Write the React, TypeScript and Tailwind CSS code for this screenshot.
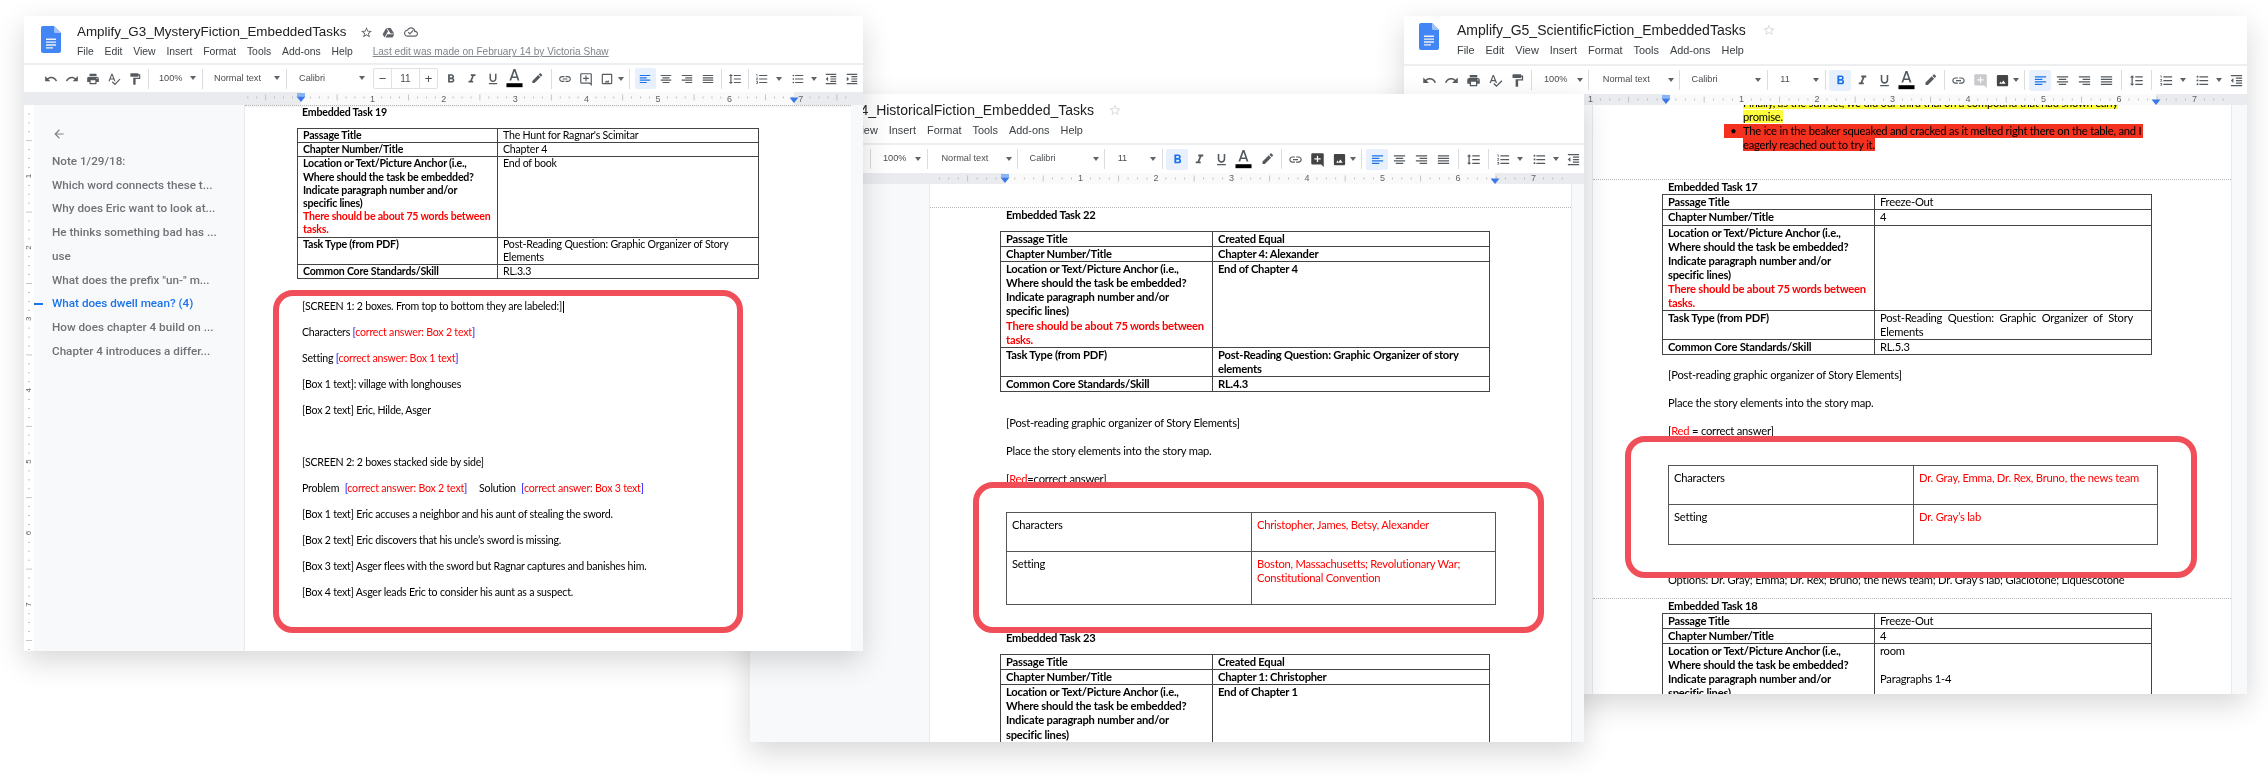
import type { ReactNode } from 'react';

const ICON = {
  undo: 'M12.5 8c-2.65 0-5.05.99-6.9 2.6L2 7v9h9l-3.62-3.62c1.39-1.16 3.16-1.88 5.12-1.88 3.54 0 6.55 2.31 7.6 5.5l2.37-.78C21.08 11.03 17.15 8 12.5 8z',
  redo: 'M18.4 10.6C16.55 8.99 14.15 8 11.5 8c-4.65 0-8.58 3.03-9.96 7.22L3.9 16c1.05-3.19 4.05-5.5 7.6-5.5 1.95 0 3.73.72 5.12 1.88L13 16h9V7l-3.6 3.6z',
  print: 'M19 8H5c-1.66 0-3 1.34-3 3v6h4v4h12v-4h4v-6c0-1.66-1.34-3-3-3zm-3 11H8v-5h8v5zm3-7c-.55 0-1-.45-1-1s.45-1 1-1 1 .45 1 1-.45 1-1 1zm-1-9H6v4h12V3z',
  spell: 'M12.45 16h2.09L9.43 3H7.57L2.46 16h2.09l1.12-3h5.64l1.14 3zm-6.02-5L8.5 5.48 10.57 11H6.43zm15.16.59l-8.09 8.09L9.83 16l-1.41 1.41 5.09 5.09L23 13l-1.41-1.41z',
  paint: 'M18 4V3c0-.55-.45-1-1-1H5c-.55 0-1 .45-1 1v4c0 .55.45 1 1 1h12c.55 0 1-.45 1-1V6h1v4H9v11c0 .55.45 1 1 1h2c.55 0 1-.45 1-1v-9h8V4h-3z',
  bold: 'M15.6 10.79c.97-.67 1.65-1.77 1.65-2.79 0-2.26-1.75-4-4-4H7v14h7.04c2.09 0 3.71-1.7 3.71-3.79 0-1.52-.86-2.82-2.15-3.42zM10 6.5h3c.83 0 1.5.67 1.5 1.5s-.67 1.5-1.5 1.5h-3v-3zm3.5 9H10v-3h3.5c.83 0 1.5.67 1.5 1.5s-.67 1.5-1.5 1.5z',
  italic: 'M10 4v3h2.21l-3.42 8H6v3h8v-3h-2.21l3.42-8H18V4z',
  underline: 'M12 17c3.31 0 6-2.69 6-6V3h-2.5v8c0 1.93-1.57 3.5-3.5 3.5S8.5 12.93 8.5 11V3H6v8c0 3.31 2.69 6 6 6zm-7 2v2h14v-2H5z',
  pen: 'M17.75 9L14 5.25l-10 10V19h3.75l10-10zm2.96-2.96c.39-.39.39-1.02 0-1.41l-2.34-2.34c-.39-.39-1.02-.39-1.41 0L15 4.25 18.75 8l1.96-1.96z',
  link: 'M3.9 12c0-1.71 1.39-3.1 3.1-3.1h4V7H7c-2.76 0-5 2.24-5 5s2.24 5 5 5h4v-1.9H7c-1.71 0-3.1-1.39-3.1-3.1zM8 13h8v-2H8v2zm9-6h-4v1.9h4c1.71 0 3.1 1.39 3.1 3.1s-1.39 3.1-3.1 3.1h-4V17h4c2.76 0 5-2.24 5-5s-2.24-5-5-5z',
  comment: 'M20 2H4c-1.1 0-2 .9-2 2v14c0 1.1.9 2 2 2h14l4 4V4c0-1.1-.9-2-2-2zm0 17.17L18.83 18H4V4h16v15.17zM13 6h-2v4H7v2h4v4h2v-4h4v-2h-4z',
  commentFill: 'M20 2H4c-1.1 0-2 .9-2 2v14c0 1.1.9 2 2 2h14l4 4V4c0-1.1-.9-2-2-2zM17 12h-4v4h-2v-4H7v-2h4V6h2v4h4v2z',
  image: 'M19 5v14H5V5h14m0-2H5c-1.1 0-2 .9-2 2v14c0 1.1.9 2 2 2h14c1.1 0 2-.9 2-2V5c0-1.1-.9-2-2-2zM14.14 13.86l-2 2.57L10.5 14.5 8 18h8z',
  imageFill: 'M21 19V5c0-1.1-.9-2-2-2H5c-1.1 0-2 .9-2 2v14c0 1.1.9 2 2 2h14c1.1 0 2-.9 2-2zM8.5 13.5l2 2.5 3-4 3.5 5H7l1.5-3.5z',
  left: 'M3 5h18v2H3zM3 9h12v2H3zM3 13h18v2H3zM3 17h12v2H3z',
  center: 'M3 5h18v2H3zM6 9h12v2H6zM3 13h18v2H3zM6 17h12v2H6z',
  right: 'M3 5h18v2H3zM9 9h12v2H9zM3 13h18v2H3zM9 17h12v2H9z',
  justify: 'M3 5h18v2H3zM3 9h18v2H3zM3 13h18v2H3zM3 17h18v2H3z',
  spacing: 'M6 7h2.5L5 3.5 1.5 7H4v10H1.5L5 20.5 8.5 17H6V7zm4-2v2h12V5H10zm0 14h12v-2H10v2zm0-6h12v-2H10v2z',
  numbered: 'M2 17h2v.5H3v1h1v.5H2v1h3v-4H2v1zm1-9h1V4H2v1h1v3zm-1 3h1.8L2 13.1v.9h3v-1H3.2L5 10.9V10H2v1zm5-6v2h14V5H7zm0 14h14v-2H7v2zm0-6h14v-2H7v2z',
  bullets: 'M4 10.5c-.83 0-1.5.67-1.5 1.5s.67 1.5 1.5 1.5 1.5-.67 1.5-1.5-.67-1.5-1.5-1.5zm0-6c-.83 0-1.5.67-1.5 1.5S3.17 7.5 4 7.5 5.5 6.83 5.5 6 4.83 4.5 4 4.5zm0 12c-.83 0-1.5.68-1.5 1.5s.68 1.5 1.5 1.5 1.5-.68 1.5-1.5-.67-1.5-1.5-1.5zM7 19h14v-2H7v2zm0-6h14v-2H7v2zm0-8v2h14V5H7z',
  outdent: 'M11 17h10v-2H11v2zm-8-5l4 4V8l-4 4zm0 9h18v-2H3v2zM3 3v2h18V3H3zm8 6h10V7H11v2zm0 4h10v-2H11v2z',
  indent: 'M3 21h18v-2H3v2zM3 8v8l4-4-4-4zm8 9h10v-2H11v2zM3 3v2h18V3H3zm8 6h10V7H11v2zm0 4h10v-2H11v2z',
  star: 'M22 9.24l-7.19-.62L12 2 9.19 8.63 2 9.24l5.46 4.73L5.82 21 12 17.27 18.18 21l-1.63-7.03L22 9.24zM12 15.4l-3.76 2.27 1-4.28-3.32-2.88 4.38-.38L12 6.1l1.71 4.04 4.38.38-3.32 2.88 1 4.28L12 15.4z',
  drive: 'M7.71 3.5L1.15 15l3.43 6 6.55-11.5L7.71 3.5zM9.73 15L6.3 21h13.12l3.43-6H9.73zM22.61 14L15.84 3.5H9.1L15.84 14h6.77z',
  cloud: 'M19.35 10.04C18.67 6.59 15.64 4 12 4 9.11 4 6.6 5.64 5.35 8.04 2.34 8.36 0 10.91 0 14c0 3.31 2.69 6 6 6h13c2.76 0 5-2.24 5-5 0-2.64-2.05-4.78-4.65-4.96zM19 18H6c-2.21 0-4-1.79-4-4s1.79-4 4-4h.71C7.37 7.69 9.48 6 12 6c3.04 0 5.5 2.46 5.5 5.5v.5H19c1.66 0 3 1.34 3 3s-1.34 3-3 3zm-9-1.5l-3.5-3.5 1.41-1.41L10 13.67l5.09-5.09 1.41 1.41z',
  back: 'M20 11H7.83l5.59-5.59L12 4l-8 8 8 8 1.41-1.41L7.83 13H20v-2z',
};

function Ic({ d, className = 'size-[14px] fill-[#555a5f]' }: { d: string; className?: string }) {
  return (
    <svg viewBox="0 0 24 24" className={className} fillRule="evenodd">
      <path d={d} />
    </svg>
  );
}

function DocIcon() {
  return (
    <svg viewBox="0 0 20 27" className="h-[27px] w-[20px] shrink-0">
      <path d="M2 0h11l7 7v18a2 2 0 0 1-2 2H2a2 2 0 0 1-2-2V2a2 2 0 0 1 2-2z" fill="#4285f4" />
      <path d="M13 0l7 7h-5.5A1.5 1.5 0 0 1 13 5.5z" fill="#a1c2fa" />
      <path d="M5 12.5h10v1.4H5zM5 15.4h10v1.4H5zM5 18.3h10v1.4H5zM5 21.2h7v1.4H5z" fill="#f1f1f1" />
    </svg>
  );
}

function Caret() {
  return <span className="h-0 w-0 border-x-[3.5px] border-t-[4px] border-x-transparent border-t-[#5f6368]" />;
}

function Sep({ className }: { className: string }) {
  return (
    <span className={`flex h-[20px] justify-center ${className}`}>
      <span className="h-full w-px bg-[#dadce0]" />
    </span>
  );
}

function Drop({ label, className }: { label: string; className: string }) {
  return (
    <span className={`flex items-center justify-between pr-[3px] text-[9.2px] text-[#4a4d51] ${className}`}>
      <span>{label}</span>
      <Caret />
    </span>
  );
}

function Tool({ d, wide, active, iconClass }: { d: string; wide?: boolean; active?: boolean; iconClass?: string }) {
  const sized = wide ? 'size-[15px]' : 'size-[14px]';
  return (
    <span className={`flex h-[21px] shrink-0 items-center justify-center rounded-[2px] ${wide ? 'w-[22px]' : 'w-[21px]'} ${active ? 'bg-[#e8f0fe]' : ''}`}>
      <Ic d={d} className={`${sized} ${iconClass ?? (active ? 'fill-[#1a73e8]' : 'fill-[#555a5f]')}`} />
    </span>
  );
}

function ColorA({ wide }: { wide?: boolean }) {
  return (
    <span className={`flex h-[21px] shrink-0 justify-center ${wide ? 'w-[22px]' : 'w-[21px]'}`}>
      <svg viewBox="0 0 18 22" className="h-[21px] w-[17px]">
        <path d="M8 1L3.6 13h1.9l.9-2.6h5l.9 2.6h1.9L10 1H8zm-1 7.8L9 3.4l2 5.4H7z" fill="#555a5f" />
        <rect x="0.5" y="16" width="17" height="4.2" fill="#000" />
      </svg>
    </span>
  );
}

function ToolbarA() {
  return (
    <div className="flex h-[29px] shrink-0 items-center border-t-2 border-[#eceef0] pl-[16px]">
      <Tool d={ICON.undo} />
      <Tool d={ICON.redo} />
      <Tool d={ICON.print} />
      <Tool d={ICON.spell} />
      <Tool d={ICON.paint} />
      <Sep className="w-[6px]" />
      <Drop label="100%" className="w-[48px] pl-[8px]" />
      <Sep className="w-[6px]" />
      <Drop label="Normal text" className="w-[78px] pl-[9px]" />
      <Sep className="w-[7px]" />
      <Drop label="Calibri" className="w-[78px] pl-[9px]" />
      <span className="ml-[5px] flex h-[21px] w-[65px] items-center rounded-[2px] border border-[#dfe1e5] text-[10px] text-[#4a4d51]">
        <span className="flex w-[18px] justify-center border-r border-[#dfe1e5] text-[13px] leading-[19px]">−</span>
        <span className="flex-1 text-center">11</span>
        <span className="flex w-[18px] justify-center border-l border-[#dfe1e5] text-[13px] leading-[19px]">+</span>
      </span>
      <span className="w-[2.5px]" />
      <Tool d={ICON.bold} />
      <Tool d={ICON.italic} />
      <Tool d={ICON.underline} />
      <ColorA />
      <span className="ml-[2px]">
        <Tool d={ICON.pen} />
      </span>
      <Sep className="w-[7px]" />
      <Tool d={ICON.link} />
      <Tool d={ICON.comment} />
      <Tool d={ICON.image} />
      <span className="flex w-[7px]"><Caret /></span>
      <Sep className="w-[10px]" />
      <Tool d={ICON.left} active />
      <Tool d={ICON.center} />
      <Tool d={ICON.right} />
      <Tool d={ICON.justify} />
      <Sep className="w-[6px]" />
      <Tool d={ICON.spacing} />
      <Sep className="w-[6px]" />
      <Tool d={ICON.numbered} />
      <span className="flex w-[12px] justify-center"><Caret /></span>
      <span className="w-[2.5px]" />
      <Tool d={ICON.bullets} />
      <span className="flex w-[12px] justify-center"><Caret /></span>
      <Tool d={ICON.outdent} />
      <Tool d={ICON.indent} />
    </div>
  );
}

function ToolbarB({ padClass, mutedComment }: { padClass: string; mutedComment?: boolean }) {
  return (
    <div className={`flex h-[30px] shrink-0 items-center border-t-2 border-[#eceef0] ${padClass}`}>
      <Tool wide d={ICON.undo} />
      <Tool wide d={ICON.redo} />
      <Tool wide d={ICON.print} />
      <Tool wide d={ICON.spell} />
      <Tool wide d={ICON.paint} />
      <Sep className="w-[8px]" />
      <Drop label="100%" className="w-[50px] pl-[8px]" />
      <Sep className="w-[6px]" />
      <Drop label="Normal text" className="w-[85px] pl-[11px]" />
      <Sep className="w-[6px]" />
      <Drop label="Calibri" className="w-[82px] pl-[9px]" />
      <Sep className="w-[6px]" />
      <Drop label="11" className="w-[52px] pl-[10px]" />
      <Sep className="w-[7px]" />
      <Tool wide active d={ICON.bold} />
      <Tool wide d={ICON.italic} />
      <Tool wide d={ICON.underline} />
      <ColorA wide />
      <span className="ml-[2px]">
        <Tool wide d={ICON.pen} />
      </span>
      <Sep className="w-[6px]" />
      <Tool wide d={ICON.link} />
      <Tool wide d={ICON.commentFill} iconClass={mutedComment ? 'fill-[#c8cacd]' : 'fill-[#444]'} />
      <Tool wide d={ICON.imageFill} iconClass="fill-[#444]" />
      <span className="flex w-[6px] shrink-0"><Caret /></span>
      <Sep className="w-[10px] shrink-0" />
      <Tool wide active d={ICON.left} />
      <Tool wide d={ICON.center} />
      <Tool wide d={ICON.right} />
      <Tool wide d={ICON.justify} />
      <Sep className="w-[8px] shrink-0" />
      <Tool wide d={ICON.spacing} />
      <Sep className="w-[8px] shrink-0" />
      <Tool wide d={ICON.numbered} />
      <span className="flex w-[12px] shrink-0 justify-center"><Caret /></span>
      <span className="w-[2px] shrink-0" />
      <Tool wide d={ICON.bullets} />
      <span className="flex w-[12px] shrink-0 justify-center"><Caret /></span>
      <Tool wide d={ICON.outdent} />
    </div>
  );
}

// horizontal ruler, all x values are relative to the window
function Ruler({ width, height, pageL, pageR, zero, step, marginR }: { width: number; height: number; pageL: number; pageR: number; zero: number; step: number; marginR: number }) {
  const ticks: ReactNode[] = [];
  for (let i = -16; i < 72; i++) {
    const x = zero + (i * step) / 8;
    if (x < pageL || x > pageR) continue;
    if (i % 8 === 0) {
      const n = i / 8;
      if (n === 0) continue;
      ticks.push(
        <text key={i} x={x} y={height - 3} fontSize="9" textAnchor="middle" fill="#5f6368" fontFamily="Liberation Sans">
          {Math.abs(n)}
        </text>,
      );
    } else {
      const long = i % 4 === 0;
      ticks.push(<rect key={i} x={x} y={long ? 2.5 : 4.5} width="0.8" height={long ? 6 : 2} fill={long ? '#b5b8bc' : '#b0b3b7'} />);
    }
  }
  return (
    <svg width={width} height={height} className="block shrink-0">
      <rect width={width} height={height} fill="#e9ebee" />
      <rect x={zero} width={marginR - zero} height={height} fill="#fafafb" />
      {ticks}
      <rect x={zero - 4} y="1" width="8" height="3.5" fill="#8ab4f8" />
      <path d={`M${zero - 4.5} 4.5h9L${zero} 10z`} fill="#3b78e7" />
      <path d={`M${marginR - 4.5} 5.5h9L${marginR} 11z`} fill="#3b78e7" />
    </svg>
  );
}

function VRuler() {
  const items: ReactNode[] = [];
  for (let i = 0; i < 62; i++) {
    const y = 71 + (i * 71.4) / 8 - 71.4;
    if (y < 0) continue;
    if (i % 8 === 0) {
      const yy = y;
      items.push(
        <text key={i} x="5" y={yy} fontSize="8" textAnchor="middle" fill="#5f6368" fontFamily="Liberation Sans" transform={`rotate(-90 5 ${yy})`} dominantBaseline="middle">
          {i / 8}
        </text>,
      );
    } else {
      const long = i % 4 === 0;
      items.push(<rect key={i} x={long ? 2 : 4} y={y} width={long ? 6 : 2} height="0.8" fill="#b5b8bc" />);
    }
  }
  return (
    <svg width="10" height="546" className="block shrink-0 bg-white">
      {items}
    </svg>
  );
}

function DottedLine() {
  return <div className="border-t border-dotted border-[#b8b8b8]" />;
}

const ANCHOR = ['Location or Text/Picture Anchor (i.e.,', 'Where should the task be embedded?', 'Indicate paragraph number and/or', 'specific lines)'];

function AnchorCell() {
  return (
    <>
      {ANCHOR.map((t) => (
        <div key={t}>{t}</div>
      ))}
      <div className="text-[#f00]">There should be about 75 words between</div>
      <div className="text-[#f00]">tasks.</div>
    </>
  );
}

function TaskTable({ rows, widthClass, leftClass, rightBold, className = '' }: { rows: [ReactNode, ReactNode][]; widthClass: string; leftClass: string; rightBold?: boolean; className?: string }) {
  return (
    <table className={`table-fixed border-collapse ${widthClass} ${className}`}>
      <colgroup>
        <col className={leftClass} />
        <col />
      </colgroup>
      <tbody>
        {rows.map((r, i) => (
          <tr key={i}>
            <td className="border border-[#444] px-[5px] align-top font-bold">{r[0]}</td>
            <td className={`border border-[#444] px-[5px] align-top ${rightBold ? 'font-bold' : ''}`}>{r[1]}</td>
          </tr>
        ))}
      </tbody>
    </table>
  );
}

function StoryTable({ widthClass, leftClass, rows }: { widthClass: string; leftClass: string; rows: { label: string; value: ReactNode; h: string }[] }) {
  return (
    <table className={`table-fixed border-collapse ${widthClass}`}>
      <colgroup>
        <col className={leftClass} />
        <col />
      </colgroup>
      <tbody>
        {rows.map((r) => (
          <tr key={r.label} className={r.h}>
            <td className="border border-[#555] px-[5px] pt-[5px] align-top">{r.label}</td>
            <td className="border border-[#555] px-[5px] pt-[5px] align-top text-[#f00]">{r.value}</td>
          </tr>
        ))}
      </tbody>
    </table>
  );
}

function RedBox({ className }: { className: string }) {
  return <div className={`absolute rounded-[20px] border-[6px] border-[#f04f59] ${className}`} />;
}

const Blue = ({ children }: { children: ReactNode }) => <span className="text-[#00f]">{children}</span>;
const Red = ({ children }: { children: ReactNode }) => <span className="text-[#f00]">{children}</span>;

const OUTLINE = [
  'Note 1/29/18:',
  'Which word connects these t...',
  'Why does Eric want to look at...',
  'He thinks something bad has ...',
  'use',
  'What does the prefix "un-" m...',
  'What does dwell mean? (4)',
  'How does chapter 4 build on ...',
  'Chapter 4 introduces a differ...',
];

function Answer({ box }: { box: number }) {
  return (
    <>
      <Blue>[</Blue>
      <Red>correct answer: Box {box} text</Red>
      <Blue>]</Blue>
    </>
  );
}

function WindowOne() {
  const lines: ReactNode[] = [
    <>
      [SCREEN 1: 2 boxes. From top to bottom they are labeled:]
      <span className="ml-px inline-block h-[12px] w-px bg-black align-middle" />
    </>,
    <>Characters <Answer box={2} /></>,
    <>Setting <Answer box={1} /></>,
    '[Box 1 text]: village with longhouses',
    '[Box 2 text] Eric, Hilde, Asger',
    '',
    '[SCREEN 2: 2 boxes stacked side by side]',
    <>
      Problem <span className="ml-[3px]"><Answer box={2} /></span>
      <span className="ml-[12px]">Solution</span> <span className="ml-[3px]"><Answer box={3} /></span>
    </>,
    '[Box 1 text] Eric accuses a neighbor and his aunt of stealing the sword.',
    "[Box 2 text] Eric discovers that his uncle’s sword is missing.",
    '[Box 3 text] Asger flees with the sword but Ragnar captures and banishes him.',
    '[Box 4 text] Asger leads Eric to consider his aunt as a suspect.',
  ];
  return (
    <div className="absolute left-[24px] top-[16px] z-30 flex h-[635px] w-[839px] flex-col overflow-hidden bg-white shadow-[0_10px_28px_rgba(0,0,0,0.16)]">
      <div className="flex h-[47px] shrink-0 items-start pl-[17px] pt-[10px]">
        <DocIcon />
        <div className="ml-[16px] -mt-[4px]">
          <div className="flex h-[20px] items-center text-[13.4px] text-[#202124]">
            <span>Amplify_G3_MysteryFiction_EmbeddedTasks</span>
            <span className="ml-[14px] flex items-center gap-[9px]">
              <Ic d={ICON.star} className="size-[13px] fill-[#5f6368]" />
              <Ic d={ICON.drive} className="size-[13px] fill-[#5f6368]" />
              <Ic d={ICON.cloud} className="size-[14px] fill-[#5f6368]" />
            </span>
          </div>
          <div className="mt-[2px] flex h-[16px] items-center gap-[10.8px] text-[10.4px] text-[#3c4043]">
            <span>File</span>
            <span>Edit</span>
            <span>View</span>
            <span>Insert</span>
            <span>Format</span>
            <span>Tools</span>
            <span>Add-ons</span>
            <span>Help</span>
            <span className="ml-[9px] text-[10.1px] text-[#80868b] underline">Last edit was made on February 14 by Victoria Shaw</span>
          </div>
        </div>
      </div>
      <ToolbarA />
      <Ruler width={839} height={13} pageL={221} pageR={827} zero={277} step={71.4} marginR={770} />
      <div className="flex min-h-0 flex-1 shadow-[inset_0_2px_2px_rgba(0,0,0,0.06)]">
        <VRuler />
        <aside className="w-[211px] shrink-0 border-r border-[#e8eaed] bg-[#f8f9fa] pt-[22px] text-[11.7px] font-medium text-[#6f7378] font-['Roboto',sans-serif]">
          <div className="pl-[18px]">
            <Ic d={ICON.back} className="size-[14px] fill-[#80868b]" />
          </div>
          <ul className="mt-[9px]">
            {OUTLINE.map((item) => {
              const active = item.startsWith('What does dwell');
              return (
                <li key={item} className={`flex h-[23.7px] items-center ${active ? 'text-[#1a73e8]' : ''}`}>
                  <span className={`mr-[9px] h-[2px] w-[9px] ${active ? 'bg-[#1a73e8]' : ''}`} />
                  {item}
                </li>
              );
            })}
          </ul>
        </aside>
        <main className="relative flex-1 overflow-hidden border-t border-dotted border-[#b8b8b8] text-[10.6px] leading-[13.2px] text-black font-['Lato',sans-serif] tracking-[-0.02em]">
          <div className="pl-[52px]">
            <h3 className="h-[14px] pl-[5px] text-[10.6px] font-bold">Embedded Task 19</h3>
            <TaskTable
              className="mt-[8px]"
              widthClass="w-[462px]"
              leftClass="w-[200px]"
              rows={[
                ['Passage Title', <span className="font-normal">The Hunt for Ragnar's Scimitar</span>],
                ['Chapter Number/Title', 'Chapter 4'],
                [<AnchorCell />, 'End of book'],
                ['Task Type (from PDF)', <>Post-Reading Question: Graphic Organizer of Story<br />Elements</>],
                ['Common Core Standards/Skill', 'RL.3.3'],
              ]}
            />
            <div className="mt-[14px] pl-[5px]">
              {lines.map((l, i) => (
                <p key={i} className="flex h-[26px] items-center whitespace-pre-wrap">
                  <span>{l}</span>
                </p>
              ))}
            </div>
          </div>
          <RedBox className="left-[28px] top-[184px] h-[343px] w-[470px]" />
        </main>
        <div className="w-[12px] shrink-0 bg-[#f8f9fa]" />
      </div>
    </div>
  );
}

function Menu() {
  return (
    <div className="mt-[2px] flex h-[16px] items-center gap-[11px] text-[10.9px] text-[#3c4043]">
      <span>File</span>
      <span>Edit</span>
      <span>View</span>
      <span>Insert</span>
      <span>Format</span>
      <span>Tools</span>
      <span>Add-ons</span>
      <span>Help</span>
    </div>
  );
}

function WindowTwo() {
  return (
    <div className="absolute left-[750px] top-[94px] z-20 flex h-[648px] w-[834px] flex-col overflow-hidden bg-white shadow-[0_10px_28px_rgba(0,0,0,0.16)]">
      <div className="flex h-[49px] shrink-0 items-start pl-[8px] pt-[8px]">
        <DocIcon />
        <div className="ml-[18px] -mt-[2px]">
          <div className="flex h-[20px] items-center text-[14px] text-[#202124]">
            <span>Amplify_G4_HistoricalFiction_Embedded_Tasks</span>
            <Ic d={ICON.star} className="ml-[14px] size-[14px] fill-[#dadce0]" />
          </div>
          <Menu />
        </div>
      </div>
      <ToolbarB padClass="pl-[7px]" />
      <Ruler width={834} height={11} pageL={180} pageR={821} zero={255} step={75.5} marginR={745} />
      <div className="flex min-h-0 flex-1">
        <div className="w-[180px] shrink-0 border-r border-[#e8eaed] bg-[#f8f9fa]" />
        <main className="flex-1 overflow-hidden text-[11.2px] leading-[14.1px] text-black font-['Lato',sans-serif] tracking-[-0.02em]">
          <div className="relative h-full">
            <div className="pt-[23px]">
              <DottedLine />
            </div>
            <div className="pl-[70px]">
              <h3 className="h-[14px] pl-[6px] font-bold">Embedded Task 22</h3>
              <TaskTable
                className="mt-[9px]"
                widthClass="w-[490px]"
                leftClass="w-[212px]"
                rightBold
                rows={[
                  ['Passage Title', 'Created Equal'],
                  ['Chapter Number/Title', 'Chapter 4: Alexander'],
                  [<AnchorCell />, 'End of Chapter 4'],
                  ['Task Type (from PDF)', <>Post-Reading  Question: Graphic Organizer of story<br />elements</>],
                  ['Common Core Standards/Skill', 'RL.4.3'],
                ]}
              />
              <div className="mt-[17px] pl-[6px]">
                <p className="flex h-[28px] items-center">[Post-reading graphic organizer of Story Elements]</p>
                <p className="flex h-[28px] items-center">Place the story elements into the story map.</p>
                <p className="flex h-[28px] items-center">
                  <span>[<Red>Red</Red>=correct answer]</span>
                </p>
              </div>
              <div className="mt-[19px] pl-[6px]">
                <StoryTable
                  widthClass="w-[490px]"
                  leftClass="w-[245px]"
                  rows={[
                    { label: 'Characters', value: 'Christopher, James, Betsy, Alexander', h: 'h-[39px]' },
                    { label: 'Setting', value: <>Boston, Massachusetts; Revolutionary War;<br />Constitutional Convention</>, h: 'h-[53px]' },
                  ]}
                />
              </div>
              <h3 className="mt-[26px] h-[14px] pl-[6px] font-bold">Embedded Task 23</h3>
              <TaskTable
                className="mt-[9px]"
                widthClass="w-[490px]"
                leftClass="w-[212px]"
                rightBold
                rows={[
                  ['Passage Title', 'Created Equal'],
                  ['Chapter Number/Title', 'Chapter 1: Christopher'],
                  [<AnchorCell />, 'End of Chapter 1'],
                ]}
              />
            </div>
            <RedBox className="left-[43px] top-[298px] h-[151px] w-[571px]" />
          </div>
        </main>
        <div className="w-[13px] shrink-0 border-l border-[#e8eaed] bg-[#f8f9fa]" />
      </div>
    </div>
  );
}

function WindowThree() {
  return (
    <div className="absolute left-[1404px] top-[16px] z-10 flex h-[678px] w-[843px] flex-col overflow-hidden bg-white shadow-[0_10px_28px_rgba(0,0,0,0.16)]">
      <div className="flex h-[48px] shrink-0 items-start pl-[15px] pt-[7px]">
        <DocIcon />
        <div className="ml-[18px] -mt-[3px]">
          <div className="flex h-[20px] items-center text-[14px] text-[#202124]">
            <span>Amplify_G5_ScientificFiction_EmbeddedTasks</span>
            <Ic d={ICON.star} className="ml-[16px] size-[14px] fill-[#dadce0]" />
          </div>
          <Menu />
        </div>
      </div>
      <ToolbarB padClass="pl-[14px]" mutedComment />
      <Ruler width={843} height={11} pageL={184} pageR={828} zero={262} step={75.5} marginR={752} />
      <div className="flex min-h-0 flex-1">
        <div className="w-[188px] shrink-0 bg-[#f8f9fa]" />
        <main className="flex-1 overflow-hidden border-x border-[#e8eaed] text-[11.2px] leading-[14.1px] text-black font-['Lato',sans-serif] tracking-[-0.02em]">
          <div className="relative flow-root h-full">
            <div className="-mt-[9px] pl-[150px]">
              <div><span className="bg-[#fdfd3d]">Finally, as the sun set, we did our third trial on a compound that had shown early</span></div>
              <div><span className="bg-[#fdfd3d]">promise.</span></div>
              <div className="-ml-[19px] flex w-[419px] bg-[#f4301f]">
                <span className="flex w-[19px] justify-center">•</span>
                <span>The ice in the beaker squeaked and cracked as it melted right there on the table, and I</span>
              </div>
              <div><span className="bg-[#f4301f]">eagerly reached out to try it.</span></div>
            </div>
            <div className="pt-[27px]">
              <DottedLine />
            </div>
            <div className="pl-[69px]">
              <h3 className="h-[14px] pl-[6px] font-bold">Embedded Task 17</h3>
              <TaskTable
                widthClass="w-[490px]"
                leftClass="w-[212px]"
                rows={[
                  ['Passage Title', <span className="font-normal">Freeze-Out</span>],
                  ['Chapter Number/Title', '4'],
                  [<AnchorCell />, ''],
                  ['Task Type (from PDF)', <div className="font-normal [word-spacing:3px]">Post-Reading  Question:  Graphic  Organizer of  Story<br />Elements</div>],
                  ['Common Core Standards/Skill', 'RL.5.3'],
                ]}
              />
              <div className="mt-[6px] pl-[6px]">
                <p className="flex h-[28px] items-center">[Post-reading graphic organizer of Story Elements]</p>
                <p className="flex h-[28px] items-center">Place the story elements into the story map.</p>
                <p className="flex h-[28px] items-center">
                  <span>[<Red>Red</Red> = correct answer]</span>
                </p>
              </div>
              <div className="mt-[20px] pl-[6px]">
                <StoryTable
                  widthClass="w-[490px]"
                  leftClass="w-[245px]"
                  rows={[
                    { label: 'Characters', value: 'Dr. Gray, Emma, Dr. Rex, Bruno, the news team', h: 'h-[39px]' },
                    { label: 'Setting', value: 'Dr. Gray’s lab', h: 'h-[40px]' },
                  ]}
                />
              </div>
              <p className="mt-[28px] pl-[6px]">Options: Dr. Gray; Emma; Dr. Rex; Bruno; the news team; Dr. Gray’s lab; Glaciotone; Liquescotone</p>
            </div>
            <div className="pt-[10px]">
              <DottedLine />
            </div>
            <div className="pl-[69px]">
              <h3 className="h-[14px] pl-[6px] font-bold">Embedded Task 18</h3>
              <TaskTable
                widthClass="w-[490px]"
                leftClass="w-[212px]"
                rows={[
                  ['Passage Title', 'Freeze-Out'],
                  ['Chapter Number/Title', '4'],
                  [<AnchorCell />, <>room<br /><br />Paragraphs 1-4</>],
                ]}
              />
            </div>
            <RedBox className="left-[32px] top-[331px] h-[142px] w-[572px]" />
          </div>
        </main>
        <div className="w-[15px] shrink-0 bg-[#f8f9fa]" />
      </div>
    </div>
  );
}

export default function App() {
  return (
    <div className="relative h-[774px] w-[2268px] overflow-hidden bg-white blur-[0.4px] font-['Liberation_Sans',Arial,sans-serif]">
      <WindowThree />
      <WindowTwo />
      <WindowOne />
    </div>
  );
}
